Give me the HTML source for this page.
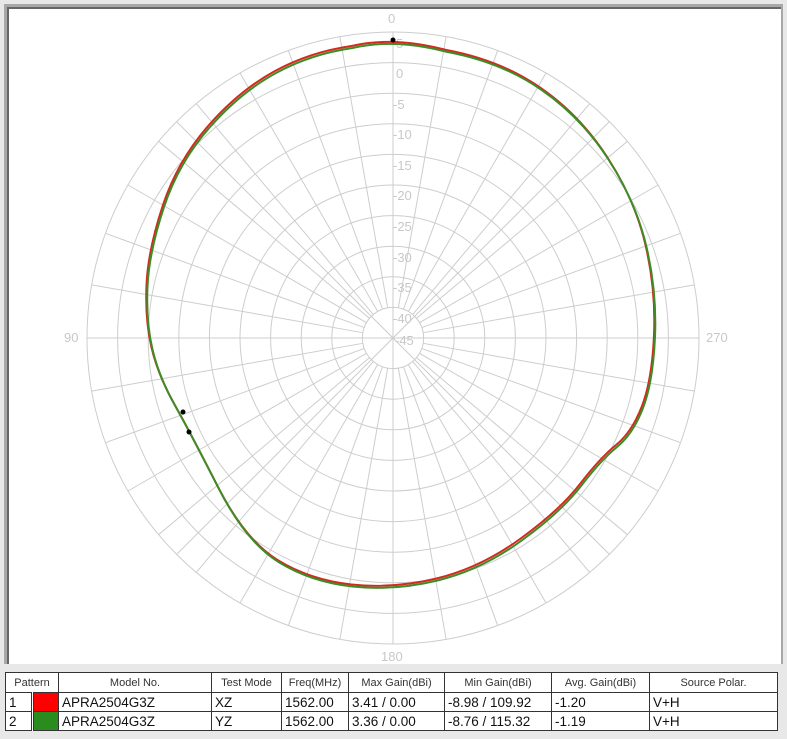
<!DOCTYPE html>
<html><head><meta charset="utf-8"><style>
body{margin:0;width:787px;height:739px;background:#e8e8e8;position:relative;overflow:hidden;font-family:"Liberation Sans",sans-serif}
.frame{position:absolute;left:4px;top:4px;width:779px;height:660px;background:#fff;border-top:3px solid #a8a8a8;border-left:3px solid #a8a8a8;border-right:2px solid #a8a8a8;box-sizing:border-box}
.frame:before{content:"";position:absolute;left:0;top:0;right:0;bottom:0;border-top:2px solid #666;border-left:2px solid #666}
.tbl{position:absolute;left:5px;top:672px;width:773px;border-collapse:collapse;font-size:11px;background:#fff}
.tbl td{border:1px solid #333;padding:0 3px;height:18px;white-space:nowrap;overflow:hidden}
.tbl tr.h td{text-align:center;font-size:11px;color:#333;height:19px}
.tbl tr.d td{font-size:13.5px;color:#111}
</style></head><body>
<div class="frame"></div>
<svg style="position:absolute;left:0;top:0" width="787" height="665">
<defs><line id="s" x1="393" y1="307.4" x2="393" y2="32"/></defs>
<g stroke="#cdcdcd" stroke-width="1" fill="none">
<circle cx="393" cy="338" r="30.6"/><circle cx="393" cy="338" r="61.2"/><circle cx="393" cy="338" r="91.8"/><circle cx="393" cy="338" r="122.4"/><circle cx="393" cy="338" r="153"/><circle cx="393" cy="338" r="183.6"/><circle cx="393" cy="338" r="214.2"/><circle cx="393" cy="338" r="244.8"/><circle cx="393" cy="338" r="275.4"/><circle cx="393" cy="338" r="306"/>
<line x1="393" y1="32" x2="393" y2="644"/><line x1="87" y1="338" x2="699" y2="338"/>
<line x1="176.6" y1="121.6" x2="609.4" y2="554.4"/><line x1="176.6" y1="554.4" x2="609.4" y2="121.6"/>
<use href="#s" transform="rotate(10 393 338)"/><use href="#s" transform="rotate(20 393 338)"/><use href="#s" transform="rotate(30 393 338)"/><use href="#s" transform="rotate(40 393 338)"/><use href="#s" transform="rotate(50 393 338)"/><use href="#s" transform="rotate(60 393 338)"/><use href="#s" transform="rotate(70 393 338)"/><use href="#s" transform="rotate(80 393 338)"/>
<use href="#s" transform="rotate(100 393 338)"/><use href="#s" transform="rotate(110 393 338)"/><use href="#s" transform="rotate(120 393 338)"/><use href="#s" transform="rotate(130 393 338)"/><use href="#s" transform="rotate(140 393 338)"/><use href="#s" transform="rotate(150 393 338)"/><use href="#s" transform="rotate(160 393 338)"/><use href="#s" transform="rotate(170 393 338)"/>
<use href="#s" transform="rotate(190 393 338)"/><use href="#s" transform="rotate(200 393 338)"/><use href="#s" transform="rotate(210 393 338)"/><use href="#s" transform="rotate(220 393 338)"/><use href="#s" transform="rotate(230 393 338)"/><use href="#s" transform="rotate(240 393 338)"/><use href="#s" transform="rotate(250 393 338)"/><use href="#s" transform="rotate(260 393 338)"/>
<use href="#s" transform="rotate(280 393 338)"/><use href="#s" transform="rotate(290 393 338)"/><use href="#s" transform="rotate(300 393 338)"/><use href="#s" transform="rotate(310 393 338)"/><use href="#s" transform="rotate(320 393 338)"/><use href="#s" transform="rotate(330 393 338)"/><use href="#s" transform="rotate(340 393 338)"/><use href="#s" transform="rotate(350 393 338)"/>
</g>
<g fill="#c8c8c8" font-size="13">
<text x="388" y="23">0</text>
<text x="396" y="48">5</text><text x="396" y="78">0</text><text x="393" y="109">-5</text><text x="393" y="139">-10</text><text x="393" y="170">-15</text><text x="393" y="200">-20</text><text x="393" y="231">-25</text><text x="393" y="262">-30</text><text x="393" y="292">-35</text><text x="393" y="323">-40</text><text x="395" y="345">-45</text>
<text x="64" y="342">90</text><text x="706" y="342">270</text><text x="381" y="661">180</text>
</g>
<path id="c" d="M351.5 46Q393 36 446.5 50Q500 60 540 87.5Q580 115 607.5 157.5Q635 200 645.5 245Q656 290 654 335Q652 380 642 406Q632 432 616 445Q600 458 580 484Q560 510 520 539Q480 568 436.5 578.5Q393 589 351.5 584.5Q310 580 277.5 560Q245 540 217.5 486Q190 432 174 403.5Q158 375 151.5 347.5Q145 320 146.5 285Q148 250 163 205Q178 160 209 125Q240 90 275 71Q310 52 351.5 46Z" fill="none" stroke="#d42a1e" stroke-width="2"/>
<path d="M351.5 46Q393 36 446.5 50Q500 60 540 87.5Q580 115 607.5 157.5Q635 200 645.5 245Q656 290 654 335Q652 380 642 406Q632 432 616 445Q600 458 580 484Q560 510 520 539Q480 568 436.5 578.5Q393 589 351.5 584.5Q310 580 277.5 560Q245 540 217.5 486Q190 432 174 403.5Q158 375 151.5 347.5Q145 320 146.5 285Q148 250 163 205Q178 160 209 125Q240 90 275 71Q310 52 351.5 46Z" fill="none" stroke="#3c8c28" stroke-width="2" transform="translate(1 2)"/>
<circle cx="393" cy="40" r="2.5" fill="#000"/><circle cx="183" cy="412" r="2.5" fill="#000"/><circle cx="189" cy="432" r="2.5" fill="#000"/>
</svg>
<table class="tbl">
<tr class="h"><td colspan="2" style="width:43px">Pattern</td><td style="width:146px">Model No.</td><td style="width:63px">Test Mode</td><td style="width:60px">Freq(MHz)</td><td style="width:89px">Max Gain(dBi)</td><td style="width:100px">Min Gain(dBi)</td><td style="width:91px">Avg. Gain(dBi)</td><td>Source Polar.</td></tr>
<tr class="d"><td style="width:19px">1</td><td style="width:18px;background:#f00;border-left:3px double #333"></td><td>APRA2504G3Z</td><td>XZ</td><td>1562.00</td><td>3.41 / 0.00</td><td>-8.98 / 109.92</td><td>-1.20</td><td>V+H</td></tr>
<tr class="d"><td>2</td><td style="background:#2a8c1e;border-left:3px double #333"></td><td>APRA2504G3Z</td><td>YZ</td><td>1562.00</td><td>3.36 / 0.00</td><td>-8.76 / 115.32</td><td>-1.19</td><td>V+H</td></tr>
</table>
</body></html>
